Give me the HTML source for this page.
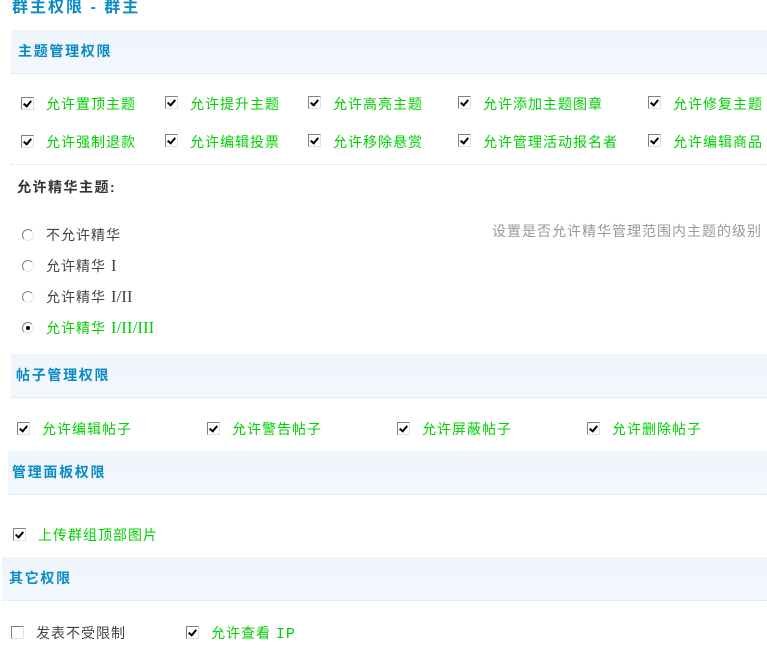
<!DOCTYPE html>
<html><head><meta charset="utf-8"><style>
body{margin:0;width:767px;height:666px;background:#fff;position:relative;overflow:hidden;font-family:"Liberation Sans","WenQuanYi Zen Hei","Noto Sans CJK SC",sans-serif;font-size:14px;letter-spacing:1px}
.a{position:absolute;white-space:nowrap;line-height:16px}
.t{color:#0a8bc6;font-weight:bold;font-size:16px;letter-spacing:2px}
.h{color:#0a8bc6;font-weight:bold;font-size:14px;letter-spacing:1.7px}
.band{position:absolute;right:0;height:43px;background:linear-gradient(#eef5fc,#f3f8fd);border-bottom:1px dotted #cfe3f3}
.g{color:#00d000}
.k{color:#444}
.s{font-family:"Liberation Serif",serif;font-size:17px;letter-spacing:0}
.cb{position:absolute;width:11px;height:11px;border:1px solid;border-color:#808080 #e0e0e0 #e0e0e0 #808080;background:#fff}
.cb.c::after{content:"";position:absolute;left:3px;top:1px;width:3px;height:6px;border:solid #000;border-width:0 2px 2px 0;transform:rotate(40deg)}
.r{position:absolute;width:10px;height:10px;border-radius:50%;border:1px solid;border-color:#808080 #e8e8e8 #e8e8e8 #808080;background:#fff}
.r.on::after{content:"";position:absolute;left:3px;top:3px;width:4px;height:4px;border-radius:50%;background:#000}
.sep{position:absolute;left:11px;right:0;border-top:1px dotted #cfe3f3}
</style></head><body>
<div class="a t" style="left:12px;top:0px">群主权限 - 群主</div>
<div class="band" style="left:11px;top:30px"></div>
<div class="a h" style="left:18px;top:43px">主题管理权限</div>

<div class="cb c" style="left:21px;top:97px"></div><div class="a g" style="left:46px;top:96px">允许置顶主题</div>
<div class="cb c" style="left:165px;top:96px"></div><div class="a g" style="left:190px;top:96px">允许提升主题</div>
<div class="cb c" style="left:308px;top:96px"></div><div class="a g" style="left:333px;top:96px">允许高亮主题</div>
<div class="cb c" style="left:458px;top:96px"></div><div class="a g" style="left:483px;top:96px">允许添加主题图章</div>
<div class="cb c" style="left:648px;top:96px"></div><div class="a g" style="left:673px;top:96px">允许修复主题</div>

<div class="cb c" style="left:21px;top:135px"></div><div class="a g" style="left:46px;top:134px">允许强制退款</div>
<div class="cb c" style="left:165px;top:134px"></div><div class="a g" style="left:190px;top:134px">允许编辑投票</div>
<div class="cb c" style="left:308px;top:134px"></div><div class="a g" style="left:333px;top:134px">允许移除悬赏</div>
<div class="cb c" style="left:458px;top:134px"></div><div class="a g" style="left:483px;top:134px">允许管理活动报名者</div>
<div class="cb c" style="left:648px;top:134px"></div><div class="a g" style="left:673px;top:134px">允许编辑商品</div>
<div class="sep" style="top:164px"></div>

<div class="a" style="left:17px;top:179px;font-weight:bold;color:#333;letter-spacing:1.5px">允许精华主题:</div>
<div class="a" style="left:492px;top:223px;color:#999">设置是否允许精华管理范围内主题的级别</div>
<div class="r" style="left:22px;top:229px"></div><div class="a k" style="left:46px;top:227px">不允许精华</div>
<div class="r" style="left:22px;top:260px"></div><div class="a k" style="left:46px;top:258px">允许精华 <span class="s">I</span></div>
<div class="r" style="left:22px;top:291px"></div><div class="a k" style="left:46px;top:289px">允许精华 <span class="s">I/II</span></div>
<div class="r on" style="left:22px;top:322px"></div><div class="a g" style="left:46px;top:320px">允许精华 <span class="s">I/II/III</span></div>

<div class="band" style="left:11px;top:354px"></div>
<div class="a h" style="left:16px;top:367px">帖子管理权限</div>
<div class="cb c" style="left:17px;top:422px"></div><div class="a g" style="left:42px;top:421px">允许编辑帖子</div>
<div class="cb c" style="left:207px;top:422px"></div><div class="a g" style="left:232px;top:421px">允许警告帖子</div>
<div class="cb c" style="left:397px;top:422px"></div><div class="a g" style="left:422px;top:421px">允许屏蔽帖子</div>
<div class="cb c" style="left:587px;top:422px"></div><div class="a g" style="left:612px;top:421px">允许删除帖子</div>

<div class="band" style="left:8px;top:451px"></div>
<div class="a h" style="left:12px;top:464px">管理面板权限</div>
<div class="cb c" style="left:13px;top:528px"></div><div class="a g" style="left:38px;top:527px">上传群组顶部图片</div>

<div class="band" style="left:2px;top:557px"></div>
<div class="a h" style="left:9px;top:570px">其它权限</div>
<div class="cb" style="left:11px;top:626px"></div><div class="a k" style="left:36px;top:625px">发表不受限制</div>
<div class="cb c" style="left:186px;top:626px"></div><div class="a g" style="left:211px;top:625px">允许查看 <span style="font-family:'Liberation Mono',monospace;font-size:15px">IP</span></div>
</body></html>
